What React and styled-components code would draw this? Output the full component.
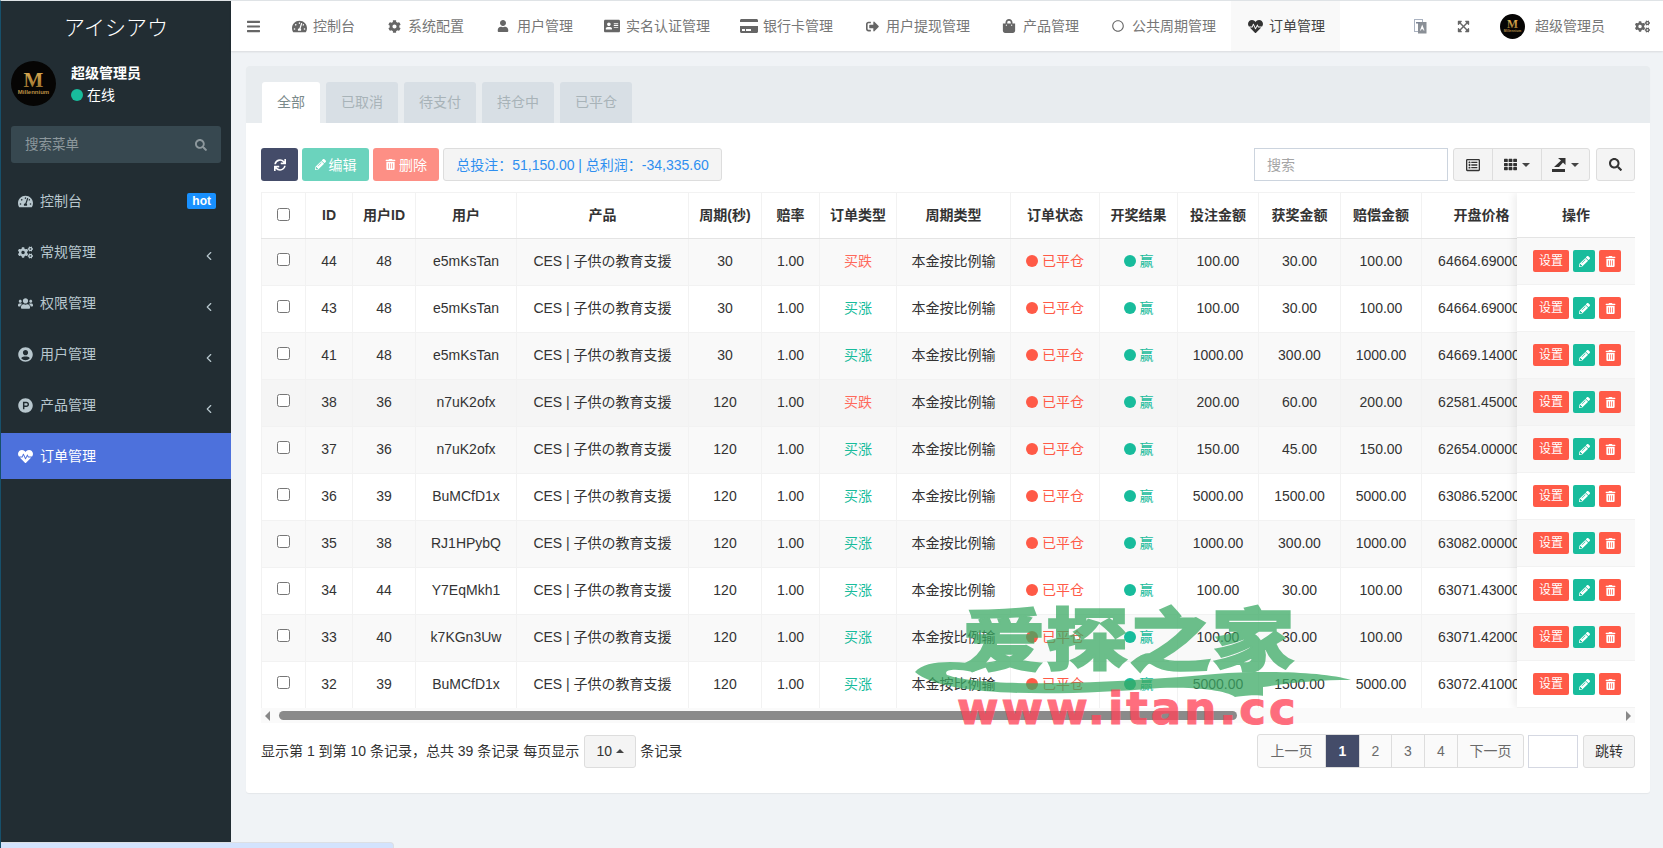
import React from 'react';
import styled, { createGlobalStyle } from 'styled-components';
import {
  FaBars, FaTachometerAlt, FaCog, FaUser, FaAddressCard, FaCreditCard, FaSignOutAlt,
  FaShoppingBag, FaRegCircle, FaHeartbeat, FaExpandArrowsAlt, FaCogs, FaUsers, FaUserCircle,
  FaProductHunt, FaSync, FaPencilAlt, FaTrashAlt, FaSearch, FaRegListAlt, FaTh,
} from 'react-icons/fa';
import { FiChevronLeft } from 'react-icons/fi';

const GlobalStyle = createGlobalStyle`
  html, body { margin: 0; padding: 0; background: #f0f3f6; }
  body {
    font-family: "Liberation Sans", "Noto Sans CJK SC", sans-serif;
    font-size: 14px;
    line-height: 20px;
    color: #333;
  }
  * { box-sizing: border-box; }
`;

const Page = styled.div`
  position: relative;
  display: flex;
  width: 1663px;
  height: 848px;
  overflow: hidden;
  background: #f0f3f6;
`;

/* sidebar */
const Sidebar = styled.aside`
  width: 231px;
  flex: none;
  background: #222d33;
  border-left: 1px solid #17506b;
  border-top: 1px solid #dfe3e6;
  color: #b8c7ce;
`;

const Logo = styled.div`
  height: 50px;
  display: flex;
  align-items: center;
  justify-content: center;
  color: #fff;
  font-size: 21px;
  font-family: "Noto Sans CJK JP", sans-serif;
  font-weight: 300;
`;

const UserPanel = styled.div`
  display: flex;
  height: 55px;
  padding: 10px 10px 0;
  gap: 15px;
`;

const UserInfo = styled.div`
  color: #fff;
  display: flex;
  flex-direction: column;
  gap: 3px;
  padding-top: 2px;
`;

const UserName = styled.div`
  font-weight: 700;
`;

const Online = styled.div`
  display: flex;
  align-items: center;
  gap: 4px;
  line-height: 18px;
`;

const Dot = styled.span`
  width: ${p => p.$size || 12}px;
  height: ${p => p.$size || 12}px;
  border-radius: 50%;
  background: ${p => p.$color};
  flex: none;
`;

const MenuSearch = styled.div`
  margin: 20px 10px 0;
  height: 37px;
  background: #374850;
  border-radius: 3px;
  display: flex;
  align-items: center;
  justify-content: space-between;
  padding: 0 14px;
  color: #8d989d;
  font-size: 13.5px;
`;

const Menu = styled.nav`
  margin-top: 15px;
  display: flex;
  flex-direction: column;
  gap: 5px;
`;

const MenuItem = styled.div`
  height: 46px;
  display: flex;
  align-items: center;
  padding: 0 15px 0 17px;
  background: ${p => (p.$active ? '#4d71dc' : 'transparent')};
  color: ${p => (p.$active ? '#fff' : '#b8c7ce')};
`;

const MenuIcon = styled.span`
  width: 22px;
  display: flex;
  align-items: center;
  font-size: 15px;
`;

const Hot = styled.span`
  margin-left: auto;
  background: #1890ff;
  color: #fff;
  font-size: 12px;
  font-weight: 700;
  line-height: 16px;
  padding: 0 5px;
  border-radius: 2px;
`;

const Chevron = styled(FiChevronLeft)`
  margin-left: auto;
  margin-right: 0;
  margin-top: 8px;
  font-size: 14px;
`;

/* main */
const Main = styled.div`
  flex: 1;
  min-width: 0;
  display: flex;
  flex-direction: column;
`;

const Header = styled.header`
  height: 51px;
  flex: none;
  display: flex;
  align-items: stretch;
  background: #fff;
  border-top: 1px solid #dfe3e6;
  box-shadow: 0 1px 2px rgba(0, 0, 0, 0.1);
  color: #777;
`;

const Burger = styled.div`
  display: flex;
  align-items: center;
  padding: 0 15px 0 16px;
  font-size: 13px;
  color: #666;
  svg { width: 13px; height: 15px; }
`;

const NavItem = styled.div`
  display: flex;
  align-items: center;
  padding: 0 15px;
  white-space: nowrap;
  background: ${p => (p.$active ? '#f9f9f9' : 'transparent')};
  color: ${p => (p.$active ? '#444' : '#777')};
`;

const NavIcon = styled.span`
  width: 18px;
  margin-right: 5px;
  display: flex;
  align-items: center;
  justify-content: center;
  font-size: ${p => p.$size || 14}px;
  color: ${p => (p.$active ? '#333' : '#666')};
`;

const HeaderRight = styled.div`
  margin-left: auto;
  display: flex;
  align-items: center;
  padding-right: 13px;
  color: #666;
`;

const HeaderTool = styled.span`
  display: flex;
  margin-right: 30px;
  font-size: 13px;
`;

const HeaderName = styled.span`
  margin: 0 30px 0 10px;
  color: #777;
`;

const Content = styled.main`
  flex: 1;
  padding: 15px 13px 0 15px;
`;

const Panel = styled.section`
  height: 727px;
  background: #fff;
  border-radius: 3px;
  box-shadow: 0 1px 1px rgba(0, 0, 0, 0.05);
`;

const TabBar = styled.div`
  height: 57px;
  background: #e8ecef;
  display: flex;
  align-items: flex-end;
  gap: 6px;
  padding-left: 16px;
  border-radius: 3px 3px 0 0;
`;

const Tab = styled.div`
  height: 41px;
  padding: 0 15px 2px;
  display: flex;
  align-items: center;
  border-radius: 3px 3px 0 0;
  background: ${p => (p.$active ? '#fff' : '#d8dfe5')};
  color: ${p => (p.$active ? '#7b8a8b' : '#a8b3b8')};
`;

const PanelBody = styled.div`
  padding: 25px 15px 0;
`;

const Toolbar = styled.div`
  height: 33px;
  display: flex;
  align-items: stretch;
  gap: 4px;
`;

const ActionButton = styled.button`
  display: flex;
  align-items: center;
  justify-content: center;
  gap: 3px;
  width: ${p => p.$w}px;
  padding: 0;
  border: 0;
  border-radius: 3px;
  background: ${p => p.$bg};
  color: #fff;
  font: inherit;
`;

const StatBox = styled.div`
  width: 279px;
  display: flex;
  align-items: center;
  justify-content: center;
  background: #f4f4f4;
  border: 1px solid #ddd;
  border-radius: 3px;
  color: #2f8ff0;
  white-space: nowrap;
`;

const SearchInput = styled.div`
  margin-left: auto;
  width: 194px;
  display: flex;
  align-items: center;
  padding: 0 12px;
  border: 1px solid #ccd4de;
  color: #a5a5a5;
`;

const ButtonGroup = styled.div`
  display: flex;
  margin-left: ${p => p.$ml || 0}px;
  border: 1px solid #ddd;
  border-radius: 3px;
  background: #f4f4f4;
  color: #333;
`;

const GroupButton = styled.div`
  width: ${p => p.$w}px;
  display: flex;
  align-items: center;
  justify-content: center;
  gap: 5px;
  font-size: 14px;
  & + & { border-left: 1px solid #ddd; }
`;

const Caret = styled.span`
  width: 0;
  height: 0;
  border-left: 4px solid transparent;
  border-right: 4px solid transparent;
  ${p => (p.$up ? 'border-bottom: 4px solid #444;' : 'border-top: 4px solid #444;')}
`;

const TableWrap = styled.div`
  position: relative;
  margin-top: 11px;
  height: 516px;
  overflow: hidden;
  border-top: 1px solid #f2f2f2;
`;

const Table = styled.table`
  table-layout: fixed;
  width: 1280px;
  border-collapse: collapse;
`;

const Th = styled.th`
  height: 45px;
  padding: 0;
  font-weight: 700;
  text-align: center;
  border-right: 1px solid #f2f2f2;
  border-bottom: 1px solid #e4e4e4;
  background: #fff;
  white-space: nowrap;
  &:first-child { border-left: 1px solid #f2f2f2; }
`;

const Row = styled.tr`
  height: 47px;
  background: ${p => (p.$hover ? '#f5f5f5' : p.$odd ? '#f9f9f9' : '#fff')};
`;

const Td = styled.td`
  padding: 0 ${p => p.$pr || 0}px 2px 0;
  text-align: center;
  white-space: nowrap;
  overflow: hidden;
  border-right: 1px solid #f2f2f2;
  border-bottom: 1px solid #f2f2f2;
  color: ${p => p.$color || '#333'};
  &:first-child { border-left: 1px solid #f2f2f2; }
`;

const Check = styled.input.attrs({ type: 'checkbox' })`
  margin: 0 0 4px;
  width: 13px;
  height: 13px;
  vertical-align: middle;
`;

const Status = styled.span`
  display: inline-flex;
  align-items: center;
  gap: 4px;
  vertical-align: -1px;
  color: ${p => p.$color};
`;

const FixedColumn = styled.div`
  position: absolute;
  top: 0;
  right: 0;
  width: 118px;
  background: #fff;
  box-shadow: -3px 0 8px rgba(0, 0, 0, 0.07);
`;

const FixedHead = styled.div`
  height: 45px;
  display: flex;
  align-items: center;
  justify-content: center;
  font-weight: 700;
  border-bottom: 1px solid #e4e4e4;
`;

const FixedRow = styled.div`
  height: 47px;
  display: flex;
  align-items: center;
  gap: 4px;
  padding-left: 16px;
  background: ${p => (p.$hover ? '#f5f5f5' : p.$odd ? '#f9f9f9' : '#fff')};
  border-bottom: 1px solid #f2f2f2;
`;

const RowButton = styled.span`
  height: 22px;
  width: ${p => p.$w || 22}px;
  display: flex;
  align-items: center;
  justify-content: center;
  background: ${p => p.$bg};
  color: #fff;
  border-radius: 2px;
  font-size: 12px;
`;

const ScrollTrack = styled.div`
  height: 15px;
  background: #fafafa;
  display: flex;
  align-items: center;
  padding: 0 4px;
  position: relative;
`;

const ScrollArrow = styled.span`
  width: 0;
  height: 0;
  border-top: 5px solid transparent;
  border-bottom: 5px solid transparent;
  ${p => (p.$right ? 'border-left: 5px solid #888; margin-left: auto;' : 'border-right: 5px solid #888;')}
`;

const ScrollThumb = styled.span`
  width: 958px;
  height: 9px;
  margin-left: 9px;
  border-radius: 5px;
  background: #8a8a8a;
`;

const FooterRow = styled.div`
  display: flex;
  align-items: center;
  margin-top: 11px;
  height: 34px;
`;

const Info = styled.span`
  white-space: nowrap;
`;

const PageSize = styled.div`
  width: 52px;
  height: 33px;
  margin: 0 4px 0 5px;
  display: flex;
  align-items: center;
  justify-content: center;
  gap: 4px;
  background: #f4f4f4;
  border: 1px solid #ddd;
  border-radius: 3px;
`;

const Pagination = styled.div`
  margin-left: auto;
  display: flex;
  height: 34px;
  border: 1px solid #ddd;
  border-radius: 3px;
  background: #fafafa;
  color: #6a6a6a;
`;

const PageLink = styled.div`
  width: ${p => p.$w}px;
  display: flex;
  align-items: center;
  justify-content: center;
  background: ${p => (p.$active ? '#444c69' : 'transparent')};
  color: ${p => (p.$active ? '#fff' : 'inherit')};
  font-weight: ${p => (p.$active ? 700 : 400)};
  & + & { border-left: 1px solid #ddd; }
`;

const JumpInput = styled.div`
  width: 50px;
  height: 33px;
  margin-left: 4px;
  border: 1px solid #d5d8e2;
`;

const JumpButton = styled.div`
  width: 52px;
  height: 33px;
  margin-left: 5px;
  display: flex;
  align-items: center;
  justify-content: center;
  background: #f4f4f4;
  border: 1px solid #ddd;
  border-radius: 3px;
`;

/* overlays */
const Watermark = styled.div`
  position: absolute;
  left: 915px;
  top: 600px;
  width: 440px;
  height: 130px;
  pointer-events: none;
`;

const WatermarkGreen = styled.div`
  position: absolute;
  inset: 0;
  opacity: 0.74;
`;

const WatermarkTitle = styled.div`
  position: absolute;
  left: 47px;
  top: 0;
  width: 333px;
  text-align: center;
  font-family: "Noto Sans CJK SC", sans-serif;
  font-weight: 900;
  font-size: 68px;
  line-height: 72px;
  white-space: nowrap;
  color: #3aaa64;
  -webkit-text-stroke: 1.5px #3aaa64;
  transform: scaleX(1.22);
`;

const WatermarkSwoosh = styled.svg`
  position: absolute;
  left: 0;
  top: 60px;
`;

const WatermarkUrl = styled.div`
  position: absolute;
  left: 42px;
  top: 84px;
  font-family: "DejaVu Sans", sans-serif;
  font-weight: 700;
  font-size: 45px;
  line-height: 50px;
  letter-spacing: 3px;
  white-space: nowrap;
  color: #ff465a;
  -webkit-text-stroke: 1px #ff465a;
  opacity: 0.78;
`;

const StatusBubble = styled.div`
  position: absolute;
  left: 1px;
  bottom: 0;
  width: 393px;
  height: 6px;
  background: #d3e3fd;
  border-top: 1px solid #dcdfe4;
  border-right: 1px solid #dcdfe4;
  border-radius: 0 4px 0 0;
`;

function Avatar({ size }) {
  return (
    <svg width={size} height={size} viewBox="0 0 45 45" style={{ flex: 'none' }}>
      <defs>
        <linearGradient id="gold" x1="0" y1="0" x2="0" y2="1">
          <stop offset="0" stopColor="#e8b75a" />
          <stop offset="1" stopColor="#8a6526" />
        </linearGradient>
      </defs>
      <circle cx="22.5" cy="22.5" r="22.5" fill="#060504" />
      <text x="22.5" y="26" textAnchor="middle" fontFamily="Liberation Serif, serif" fontSize="21" fontWeight="700" fill="url(#gold)">M</text>
      <text x="22.5" y="33" textAnchor="middle" fontFamily="Liberation Sans, sans-serif" fontSize="6" fontWeight="700" fill="#b98f45">Millennium</text>
    </svg>
  );
}

function ExportIcon() {
  return (
    <svg width="14" height="15" viewBox="0 0 14 15">
      <rect x="0" y="12" width="13" height="3" fill="#333" />
      <path d="M6 1h7.5v7L11 5.5 7 10H2l7-6.5z" fill="#333" />
    </svg>
  );
}

function TranslateIcon() {
  return (
    <svg width="13" height="15" viewBox="0 0 13 15">
      <rect x="0.5" y="0.5" width="8" height="12" fill="#fff" stroke="#aab2c0" />
      <rect x="4" y="3" width="8.5" height="11.5" fill="#8a8f96" />
      <rect x="2" y="3" width="4" height="1.5" fill="#7b8494" />
      <path d="M8.2 5.5l2.3 6h-1l-.4-1.3H7.4L7 11.5H6l2.2-6z" fill="#fff" />
    </svg>
  );
}

const navLinks = [
  [FaTachometerAlt, '控制台', 15],
  [FaCog, '系统配置', 13],
  [FaUser, '用户管理', 12],
  [FaAddressCard, '实名认证管理', 16],
  [FaCreditCard, '银行卡管理', 18],
  [FaSignOutAlt, '用户提现管理', 13],
  [FaShoppingBag, '产品管理', 14],
  [FaRegCircle, '公共周期管理', 12],
];

const sideLinks = [
  [FaCogs, '常规管理'],
  [FaUsers, '权限管理'],
  [FaUserCircle, '用户管理'],
  [FaProductHunt, '产品管理'],
];

const tabs = ['全部', '已取消', '待支付', '持仓中', '已平仓'];

const columns = [
  ['', 44], ['ID', 47], ['用户ID', 63], ['用户', 101], ['产品', 172], ['周期(秒)', 73], ['赔率', 58],
  ['订单类型', 77], ['周期类型', 114], ['订单状态', 89], ['开奖结果', 78], ['投注金额', 81],
  ['获奖金额', 82], ['赔偿金额', 81], ['开盘价格', 120],
];

const orders = [
  [44, 48, 'e5mKsTan', 30, '买跌', '100.00', '30.00', '100.00', '64664.69000'],
  [43, 48, 'e5mKsTan', 30, '买涨', '100.00', '30.00', '100.00', '64664.69000'],
  [41, 48, 'e5mKsTan', 30, '买涨', '1000.00', '300.00', '1000.00', '64669.14000'],
  [38, 36, 'n7uK2ofx', 120, '买跌', '200.00', '60.00', '200.00', '62581.45000'],
  [37, 36, 'n7uK2ofx', 120, '买涨', '150.00', '45.00', '150.00', '62654.00000'],
  [36, 39, 'BuMCfD1x', 120, '买涨', '5000.00', '1500.00', '5000.00', '63086.52000'],
  [35, 38, 'RJ1HPybQ', 120, '买涨', '1000.00', '300.00', '1000.00', '63082.00000'],
  [34, 44, 'Y7EqMkh1', 120, '买涨', '100.00', '30.00', '100.00', '63071.43000'],
  [33, 40, 'k7KGn3Uw', 120, '买涨', '100.00', '30.00', '100.00', '63071.42000'],
  [32, 39, 'BuMCfD1x', 120, '买涨', '5000.00', '1500.00', '5000.00', '63072.41000'],
];

const RED = '#ff5a47';
const TEAL = '#18bc9c';

export default function App() {
  return (
    <Page>
      <GlobalStyle />
      <Sidebar>
        <Logo>アイシアウ</Logo>
        <UserPanel>
          <Avatar size={45} />
          <UserInfo>
            <UserName>超级管理员</UserName>
            <Online><Dot $color={TEAL} />在线</Online>
          </UserInfo>
        </UserPanel>
        <MenuSearch>搜索菜单<FaSearch size={12} /></MenuSearch>
        <Menu>
          <MenuItem>
            <MenuIcon><FaTachometerAlt /></MenuIcon>控制台<Hot>hot</Hot>
          </MenuItem>
          {sideLinks.map(([Icon, label]) => (
            <MenuItem key={label}>
              <MenuIcon><Icon /></MenuIcon>{label}<Chevron />
            </MenuItem>
          ))}
          <MenuItem $active>
            <MenuIcon><FaHeartbeat /></MenuIcon>订单管理
          </MenuItem>
        </Menu>
      </Sidebar>

      <Main>
        <Header>
          <Burger><FaBars /></Burger>
          {navLinks.map(([Icon, label, size]) => (
            <NavItem key={label}>
              <NavIcon $size={size}><Icon /></NavIcon>{label}
            </NavItem>
          ))}
          <NavItem $active>
            <NavIcon $active $size={15}><FaHeartbeat /></NavIcon>订单管理
          </NavItem>
          <HeaderRight>
            <HeaderTool><TranslateIcon /></HeaderTool>
            <HeaderTool><FaExpandArrowsAlt /></HeaderTool>
            <Avatar size={25} />
            <HeaderName>超级管理员</HeaderName>
            <FaCogs size={15} />
          </HeaderRight>
        </Header>

        <Content>
          <Panel>
            <TabBar>
              {tabs.map((t, i) => <Tab key={t} $active={i === 0}>{t}</Tab>)}
            </TabBar>
            <PanelBody>
              <Toolbar>
                <ActionButton $w={37} $bg="#444c69"><FaSync size={12} /></ActionButton>
                <ActionButton $w={67} $bg="#6bd3bd"><FaPencilAlt size={11} />编辑</ActionButton>
                <ActionButton $w={66} $bg="#fd8f85"><FaTrashAlt size={11} />删除</ActionButton>
                <StatBox>总投注：51,150.00 | 总利润：-34,335.60</StatBox>
                <SearchInput>搜索</SearchInput>
                <ButtonGroup $ml={1}>
                  <GroupButton $w={38}><FaRegListAlt size={14} /></GroupButton>
                  <GroupButton $w={49}><FaTh size={13} /><Caret /></GroupButton>
                  <GroupButton $w={48}><ExportIcon /><Caret /></GroupButton>
                </ButtonGroup>
                <ButtonGroup $ml={2}>
                  <GroupButton $w={37}><FaSearch size={13} /></GroupButton>
                </ButtonGroup>
              </Toolbar>

              <TableWrap>
                <Table>
                  <colgroup>
                    {columns.map(([name, w]) => <col key={name} width={w} />)}
                  </colgroup>
                  <thead>
                    <tr>
                      {columns.map(([name]) => (
                        <Th key={name}>{name || <Check />}</Th>
                      ))}
                    </tr>
                  </thead>
                  <tbody>
                    {orders.map((o, i) => (
                      <Row key={o[0]} $odd={i % 2 === 0} $hover={i === 3}>
                        <Td><Check /></Td>
                        <Td>{o[0]}</Td>
                        <Td>{o[1]}</Td>
                        <Td>{o[2]}</Td>
                        <Td>CES | 子供の教育支援</Td>
                        <Td>{o[3]}</Td>
                        <Td>1.00</Td>
                        <Td $color={o[4] === '买跌' ? '#ff6a5c' : TEAL}>{o[4]}</Td>
                        <Td>本金按比例输</Td>
                        <Td><Status $color={RED}><Dot $color={RED} />已平仓</Status></Td>
                        <Td><Status $color={TEAL}><Dot $color={TEAL} />赢</Status></Td>
                        <Td>{o[5]}</Td>
                        <Td>{o[6]}</Td>
                        <Td>{o[7]}</Td>
                        <Td $pr={5}>{o[8]}</Td>
                      </Row>
                    ))}
                  </tbody>
                </Table>
                <FixedColumn>
                  <FixedHead>操作</FixedHead>
                  {orders.map((o, i) => (
                    <FixedRow key={o[0]} $odd={i % 2 === 0} $hover={i === 3}>
                      <RowButton $w={36} $bg={RED}>设置</RowButton>
                      <RowButton $bg={TEAL}><FaPencilAlt size={11} /></RowButton>
                      <RowButton $bg={RED}><FaTrashAlt size={11} /></RowButton>
                    </FixedRow>
                  ))}
                </FixedColumn>
              </TableWrap>
              <ScrollTrack>
                <ScrollArrow />
                <ScrollThumb />
                <ScrollArrow $right />
              </ScrollTrack>

              <FooterRow>
                <Info>显示第 1 到第 10 条记录，总共 39 条记录 每页显示</Info>
                <PageSize>10<Caret $up /></PageSize>
                <Info>条记录</Info>
                <Pagination>
                  <PageLink $w={67}>上一页</PageLink>
                  <PageLink $w={34} $active>1</PageLink>
                  <PageLink $w={32}>2</PageLink>
                  <PageLink $w={33}>3</PageLink>
                  <PageLink $w={33}>4</PageLink>
                  <PageLink $w={66}>下一页</PageLink>
                </Pagination>
                <JumpInput />
                <JumpButton>跳转</JumpButton>
              </FooterRow>
            </PanelBody>
          </Panel>
        </Content>
      </Main>

      <Watermark>
        <WatermarkGreen>
          <WatermarkTitle>爱探之家</WatermarkTitle>
          <WatermarkSwoosh width="440" height="40" viewBox="0 0 440 40">
            <path
              d="M0 12 C10 0 40 0 75 6 L58 12 C38 8 28 10 32 15 C70 28 190 24 300 14 C350 10 410 12 436 20 C405 20 380 22 348 27 L348 36 L350 36 C340 34 325 36 320 37 C310 30 280 27 245 28 C150 36 30 38 0 12 Z"
              fill="#3aaa64"
            />
          </WatermarkSwoosh>
        </WatermarkGreen>
        <WatermarkUrl>www.itan.cc</WatermarkUrl>
      </Watermark>
      <StatusBubble />
    </Page>
  );
}
